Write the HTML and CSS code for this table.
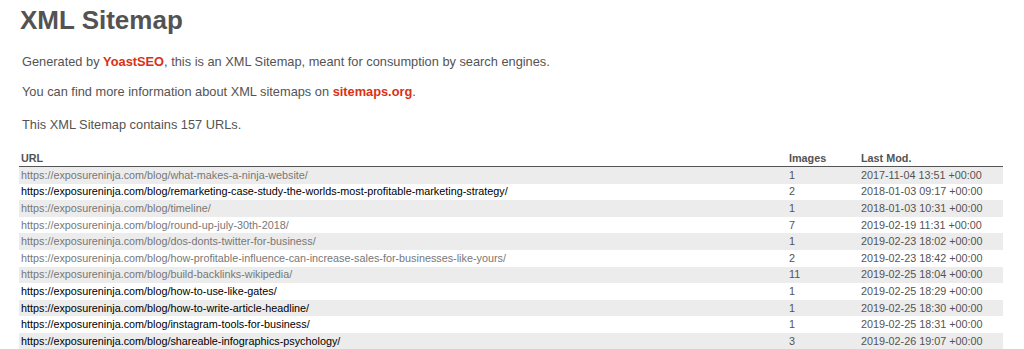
FILE: index.html
```html
<!DOCTYPE html>
<html>
<head>
<meta charset="utf-8">
<title>XML Sitemap</title>
<link rel="stylesheet" href="styles.css">
</head>
<body>
<div class="content">
  <h1 class="title">XML Sitemap</h1>
  <p class="expl">Generated by <a class="brand" href="#">YoastSEO</a>, this is an XML Sitemap, meant for consumption by search engines.</p>
  <p class="expl">You can find more information about XML sitemaps on <a class="brand" href="#">sitemaps.org</a>.</p>
  <p class="expl expl-count">This XML Sitemap contains 157 URLs.</p>
  <table class="sitemap">
    <thead>
      <tr><th class="col-url">URL</th><th class="col-img">Images</th><th class="col-mod">Last Mod.</th></tr>
    </thead>
    <tbody>
      <tr><td><a class="visited" href="#">https://exposureninja.com/blog/what-makes-a-ninja-website/</a></td><td>1</td><td>2017-11-04 13:51 +00:00</td></tr>
      <tr><td><a href="#">https://exposureninja.com/blog/remarketing-case-study-the-worlds-most-profitable-marketing-strategy/</a></td><td>2</td><td>2018-01-03 09:17 +00:00</td></tr>
      <tr><td><a class="visited" href="#">https://exposureninja.com/blog/timeline/</a></td><td>1</td><td>2018-01-03 10:31 +00:00</td></tr>
      <tr><td><a class="visited" href="#">https://exposureninja.com/blog/round-up-july-30th-2018/</a></td><td>7</td><td>2019-02-19 11:31 +00:00</td></tr>
      <tr><td><a class="visited" href="#">https://exposureninja.com/blog/dos-donts-twitter-for-business/</a></td><td>1</td><td>2019-02-23 18:02 +00:00</td></tr>
      <tr><td><a class="visited" href="#">https://exposureninja.com/blog/how-profitable-influence-can-increase-sales-for-businesses-like-yours/</a></td><td>2</td><td>2019-02-23 18:42 +00:00</td></tr>
      <tr><td><a class="visited" href="#">https://exposureninja.com/blog/build-backlinks-wikipedia/</a></td><td>11</td><td>2019-02-25 18:04 +00:00</td></tr>
      <tr><td><a href="#">https://exposureninja.com/blog/how-to-use-like-gates/</a></td><td>1</td><td>2019-02-25 18:29 +00:00</td></tr>
      <tr><td><a href="#">https://exposureninja.com/blog/how-to-write-article-headline/</a></td><td>1</td><td>2019-02-25 18:30 +00:00</td></tr>
      <tr><td><a href="#">https://exposureninja.com/blog/instagram-tools-for-business/</a></td><td>1</td><td>2019-02-25 18:31 +00:00</td></tr>
      <tr><td><a href="#">https://exposureninja.com/blog/shareable-infographics-psychology/</a></td><td>3</td><td>2019-02-26 19:07 +00:00</td></tr>
    </tbody>
  </table>
</div>
</body>
</html>
```

FILE: styles.css
```css
html, body {
  margin: 0;
  padding: 0;
  background: #fff;
}
body {
  font-family: "Liberation Sans", Arial, Helvetica, sans-serif;
  font-size: 12.8px;
  color: #545353;
}
.content {
  width: 984px;
  margin-left: 19px;
}
.title {
  margin: 0;
  padding: 5px 0 0 1px;
  font-size: 26px;
  line-height: 30px;
  font-weight: bold;
  color: #545353;
}
.expl {
  margin: 15px 3px;
  line-height: 15px;
}
.expl:first-of-type {
  margin-top: 19px;
}
.expl-count {
  margin-top: 18px;
  margin-bottom: 20px;
}
.brand {
  color: #da3114;
  font-weight: bold;
  text-decoration: none;
}
.sitemap {
  width: 100%;
  border-collapse: collapse;
  border: none;
}
.sitemap th {
  text-align: left;
  font-size: 10.8px;
  font-weight: bold;
  color: #545353;
  padding: 0 30px 2px 2px;
  border-bottom: 1px solid #555;
}
.sitemap .col-img { width: 40px; }
.sitemap .col-mod { width: 112px; }
.sitemap td {
  font-size: 10.8px;
  height: 16.6px;
  padding: 0 2px;
  line-height: 13px;
  color: #545353;
}
.sitemap tbody tr:nth-child(odd) td {
  background-color: #ececec;
}
.sitemap a {
  color: #000;
  text-decoration: none;
}
.sitemap a.visited {
  color: #777;
}
```
